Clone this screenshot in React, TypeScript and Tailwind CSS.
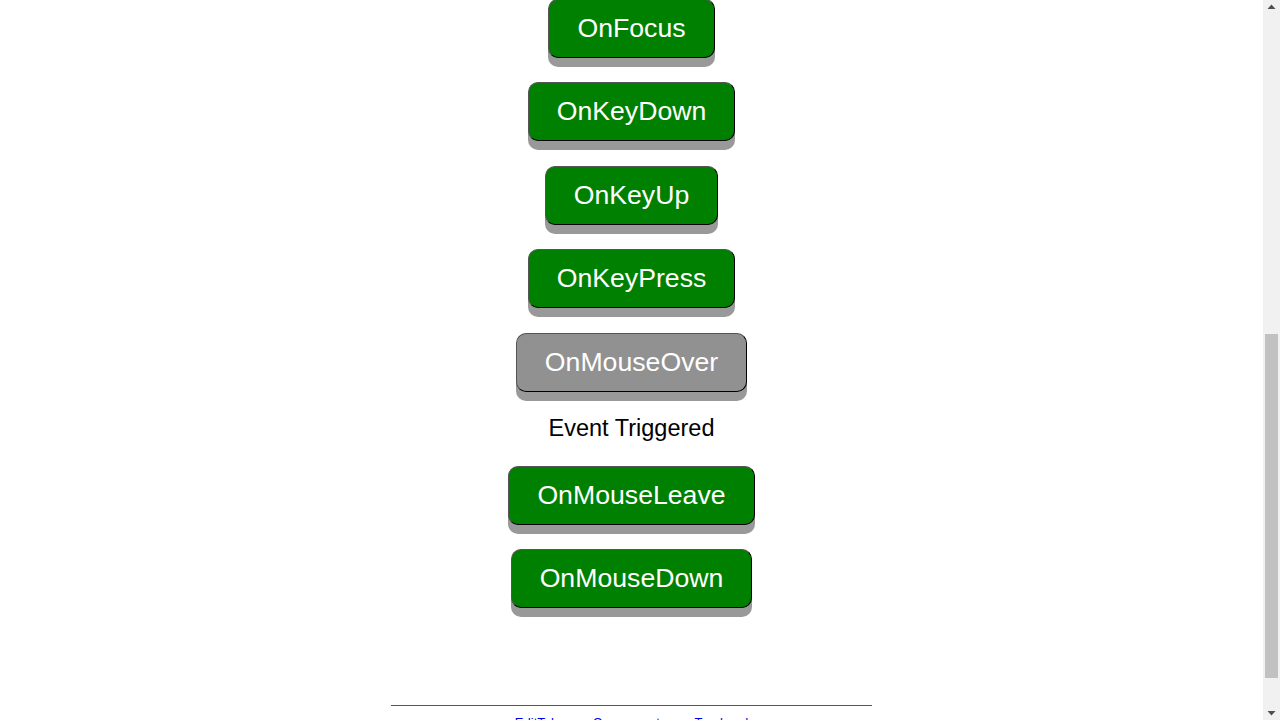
import React from "react";

const font = { fontFamily: '"Liberation Sans", Arial, sans-serif' };

function Btn({ label, grey = false, mt }: { label: string; grey?: boolean; mt: string }) {
  return (
    <button
      className={`${mt} shrink-0 h-[59px] px-[28px] rounded-[10px] border border-t-[#555] border-l-[#555] border-r-black border-b-black shadow-[0_9px_0_#999] text-white text-[26.67px] leading-none flex items-center justify-center ${
        grey ? "bg-[#919191]" : "bg-[#008000]"
      }`}
      style={font}
    >
      {label}
    </button>
  );
}

export default function App() {
  return (
    <div className="h-[720px] w-[1280px] overflow-hidden flex bg-white" style={font}>
      <div className="w-[1263px] h-[720px] overflow-hidden flex flex-col items-center">
        <Btn label="OnFocus" mt="mt-[-1px]" />
        <Btn label="OnKeyDown" mt="mt-[24px]" />
        <Btn label="OnKeyUp" mt="mt-[25px]" />
        <Btn label="OnKeyPress" mt="mt-[24px]" />
        <Btn label="OnMouseOver" grey mt="mt-[25px]" />
        <p className="shrink-0 mt-[22px] mb-[24px] h-[28px] leading-[28px] text-[23.5px] text-black">Event Triggered</p>
        <Btn label="OnMouseLeave" mt="mt-0" />
        <Btn label="OnMouseDown" mt="mt-[24px]" />
        <hr className="mt-[97px] w-[481px] border-0 border-t border-[#555] shrink-0" />
        <div className="mt-[9px] flex gap-[28px] text-[13px] leading-[16px] text-[#0000ee] shrink-0">
          <a className="underline">EditTabs</a>
          <a className="underline">Components</a>
          <a className="underline">Trackpad</a>
        </div>
      </div>
      <div className="w-[17px] h-[720px] bg-[#f1f1f1] relative shrink-0">
        <svg className="absolute left-[4px] top-[4px]" width="9" height="6" viewBox="0 0 9 6">
          <path d="M4.5 0.5 L8.5 5 L0.5 5 Z" fill="#505050" />
        </svg>
        <div className="absolute left-[2px] top-[334px] w-[13px] h-[344px] bg-[#c1c1c1]" />
        <svg className="absolute left-[4px] top-[710px]" width="9" height="6" viewBox="0 0 9 6">
          <path d="M0.5 1 L8.5 1 L4.5 5.5 Z" fill="#505050" />
        </svg>
      </div>
    </div>
  );
}
